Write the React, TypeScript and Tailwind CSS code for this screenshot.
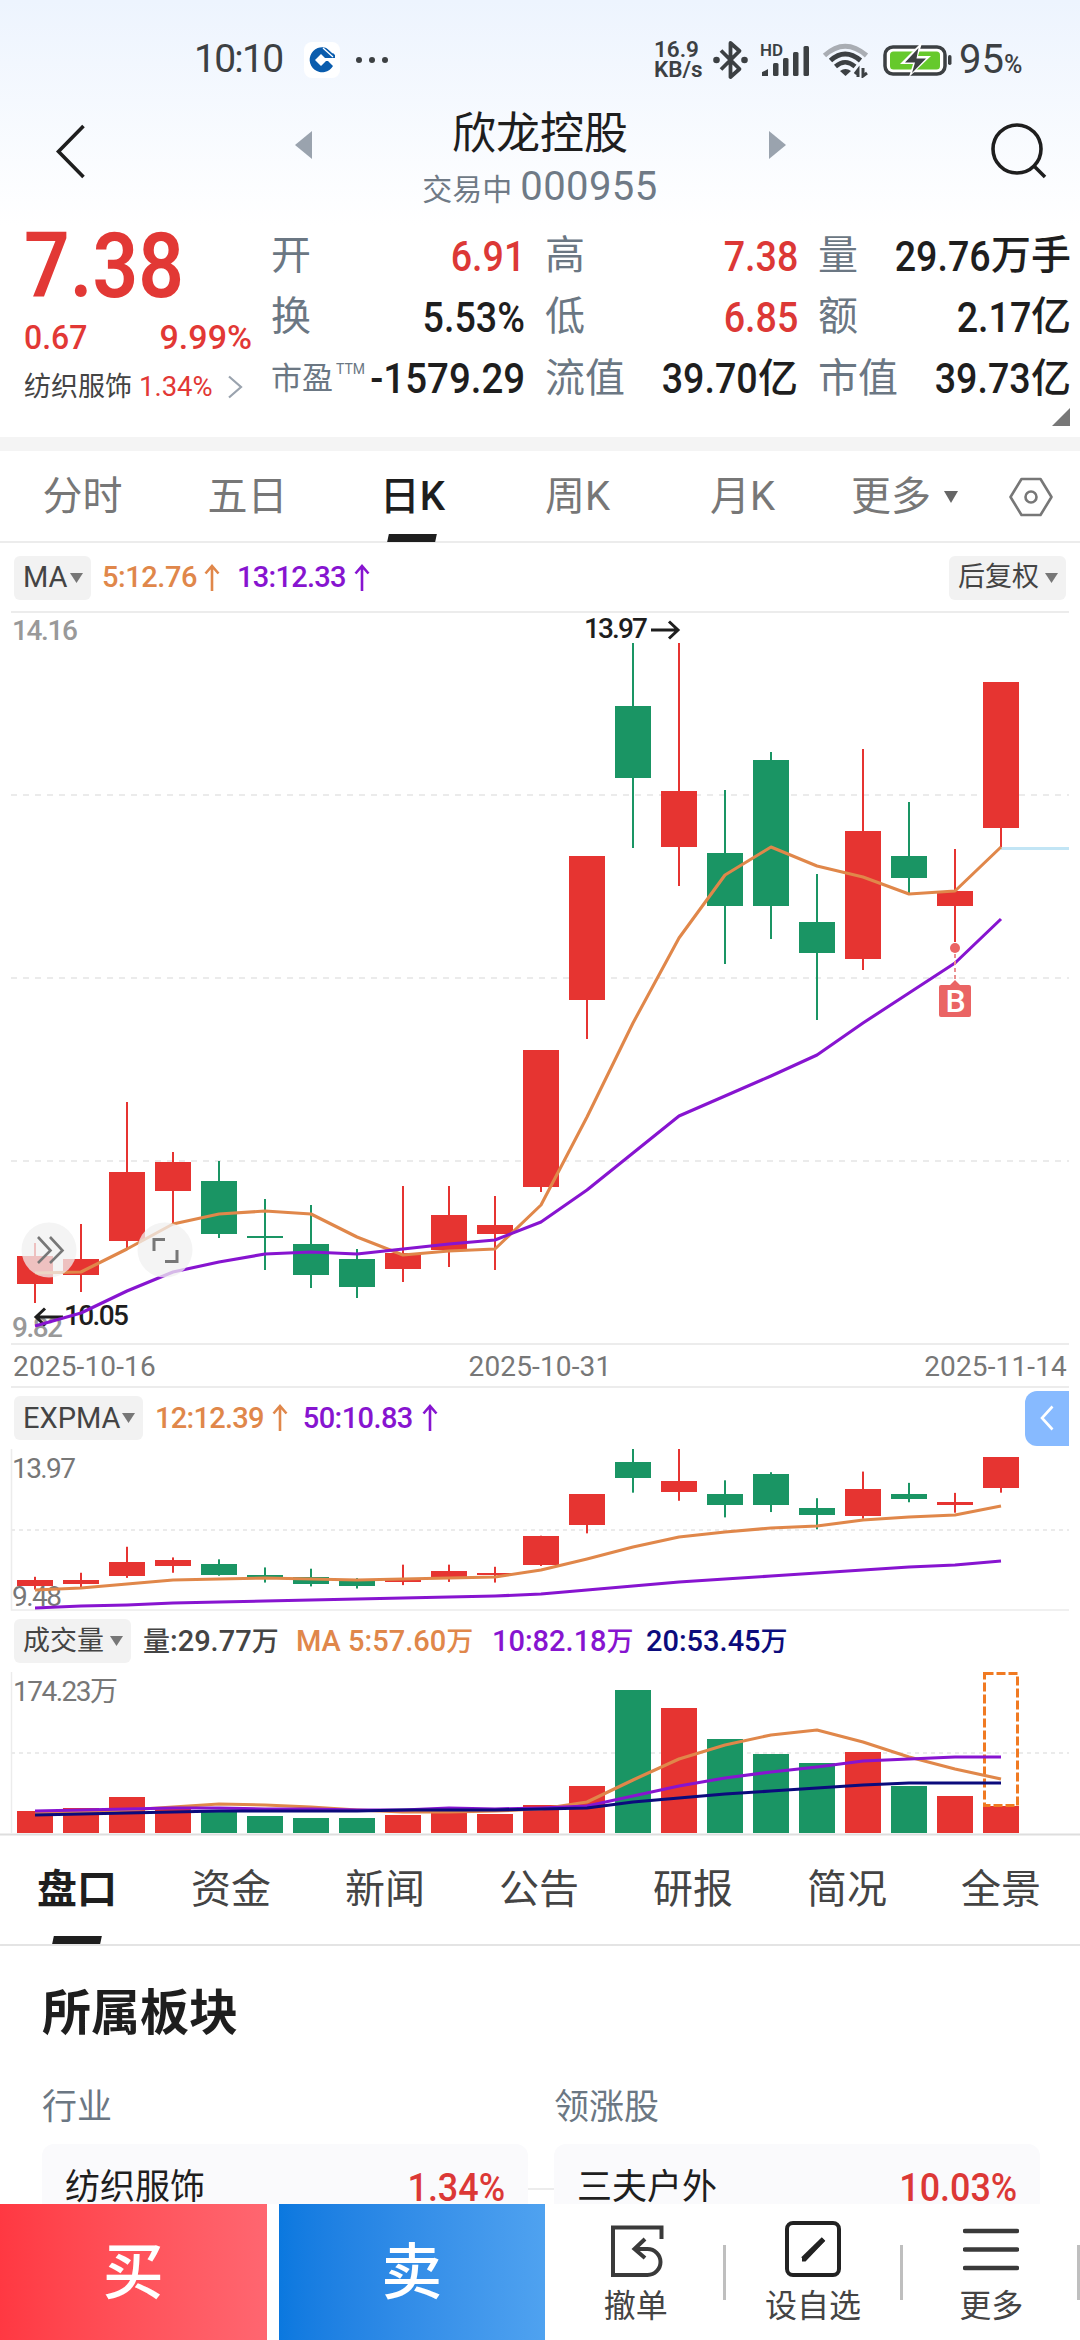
import type { ReactNode } from 'react'

const RED = '#e63431'
const GREEN = '#1a9564'
const ORANGE = '#e0874a'
const PURPLE = '#8714d0'
const NAVY = '#0b0b7c'

// top, bottom of the body, then high and low of the wick
type Candle = { up: boolean; body: [number, number]; wick: [number, number] }

const candles: Candle[] = [
  { up: true, body: [1256, 1284], wick: [1243, 1303] },
  { up: true, body: [1259, 1275], wick: [1224, 1292] },
  { up: true, body: [1172, 1241], wick: [1102, 1248] },
  { up: true, body: [1162, 1191], wick: [1152, 1224] },
  { up: false, body: [1181, 1234], wick: [1161, 1238] },
  { up: false, body: [1236, 1238], wick: [1199, 1270] },
  { up: false, body: [1244, 1275], wick: [1205, 1288] },
  { up: false, body: [1259, 1287], wick: [1249, 1298] },
  { up: true, body: [1253, 1269], wick: [1186, 1282] },
  { up: true, body: [1215, 1250], wick: [1186, 1267] },
  { up: true, body: [1225, 1234], wick: [1196, 1270] },
  { up: true, body: [1050, 1187], wick: [1050, 1192] },
  { up: true, body: [856, 1000], wick: [856, 1039] },
  { up: false, body: [706, 778], wick: [643, 848] },
  { up: true, body: [791, 847], wick: [643, 886] },
  { up: false, body: [853, 906], wick: [790, 964] },
  { up: false, body: [760, 906], wick: [752, 939] },
  { up: false, body: [922, 953], wick: [874, 1020] },
  { up: true, body: [831, 959], wick: [749, 970] },
  { up: false, body: [856, 878], wick: [802, 893] },
  { up: true, body: [891, 906], wick: [849, 942] },
  { up: true, body: [682, 828], wick: [682, 848] },
]

const ma5 = [1273, 1272, 1249, 1224, 1214, 1211, 1214, 1237, 1255, 1251, 1249, 1205, 1117, 1023, 938, 875, 847, 866, 877, 894, 891, 847]
const ma13 = [1326, 1313, 1291, 1272, 1262, 1254, 1252, 1254, 1249, 1244, 1240, 1222, 1190, 1153, 1116, 1096, 1076, 1055, 1023, 993, 963, 919]
const exp12 = [1590, 1588, 1584, 1580, 1579, 1578, 1579, 1580, 1579, 1578, 1577, 1570, 1559, 1547, 1537, 1532, 1528, 1526, 1520, 1517, 1515, 1506]
const exp50 = [1608, 1606, 1605, 1603, 1602, 1601, 1600, 1599, 1598, 1597, 1596, 1594, 1590, 1586, 1582, 1579, 1576, 1573, 1570, 1567, 1565, 1561]
const volume = [1811, 1808, 1797, 1807, 1810, 1816, 1818, 1818, 1815, 1813, 1814, 1805, 1786, 1690, 1708, 1739, 1754, 1763, 1752, 1786, 1796, 1806]
const vol5 = [1813, 1812, 1810, 1807, 1804, 1805, 1807, 1810, 1812, 1812, 1811, 1809, 1802, 1780, 1759, 1745, 1735, 1730, 1742, 1757, 1769, 1779]
const vol10 = [1811, 1810, 1809, 1808, 1808, 1809, 1809, 1810, 1810, 1808, 1809, 1808, 1806, 1796, 1786, 1778, 1772, 1767, 1761, 1759, 1757, 1757]
const vol20 = [1815, 1814, 1813, 1812, 1811, 1811, 1811, 1811, 1810, 1810, 1810, 1809, 1808, 1802, 1798, 1794, 1791, 1788, 1785, 1783, 1783, 1783]

const xAt = (i: number) => 35 + i * 46
const toMini = (y: number) => 1449 + (y - 643) * 0.213

function Line({ data, color, width = 3.1 }: { data: number[]; color: string; width?: number }) {
  const points = data.map((y, i) => `${xAt(i)},${y}`).join(' ')
  return <polyline points={points} fill="none" stroke={color} strokeWidth={width} strokeLinejoin="round" />
}

function Candles({ map = (y: number) => y }: { map?: (y: number) => number }) {
  return (
    <>
      {candles.map((c, i) => {
        const color = c.up ? RED : GREEN
        const top = Math.round(map(c.body[0]))
        const bottom = Math.round(map(c.body[1]))
        return (
          <g key={i} fill={color}>
            <rect x={xAt(i) - 1} y={map(c.wick[0])} width={2} height={map(c.wick[1]) - map(c.wick[0])} />
            <rect x={xAt(i) - 18} y={top} width={36} height={Math.max(bottom - top, 2)} />
          </g>
        )
      })}
    </>
  )
}

function Grid({ y, dash = '6 6' }: { y: number; dash?: string }) {
  return <line x1={11} x2={1069} y1={y} y2={y} stroke="#ebebeb" strokeWidth={2} strokeDasharray={dash} />
}

function Caret({ className = '' }: { className?: string }) {
  return (
    <svg viewBox="0 0 13 10" className={`h-2.5 w-[13px] shrink-0 ${className}`}>
      <path d="M0 0h13L6.500 10z" fill="currentColor" />
    </svg>
  )
}

function UpArrow() {
  return (
    <svg viewBox="0 0 16 28" className="h-7 w-4" fill="none" stroke="currentColor" strokeWidth={2.6}>
      <path d="M8 27V2M1.5 9.5L8 2l6.5 7.5" />
    </svg>
  )
}

function Chip({ children, className = '' }: { children: ReactNode; className?: string }) {
  return (
    <div className={`flex h-11 items-center justify-between rounded-md bg-[#f2f2f2] pl-[9px] pr-[8px] text-[#444] ${className}`}>
      {children}
      <Caret className="text-[#777]" />
    </div>
  )
}

function StatusBar() {
  return (
    <div className="flex h-[118px] items-center pl-[194px] pt-px text-[#3c4043]">
      <span className="w-[110px] text-[39px] leading-none tracking-[-0.045em]">10:10</span>
      <div className="flex size-[36px] items-center justify-center rounded-lg bg-white">
        <svg viewBox="0 0 28 28" className="size-7">
          <path d="M24 6A12.5 12.5 0 1 0 25 20L20 15h-2l-5 5-6-6 6-6 4 4h10V9z" fill="#0a5cad" />
          <path d="M15 2l10 9M19 1.500l6 5.500" stroke="#fff" strokeWidth={1.3} />
        </svg>
      </div>
      <div className="ml-[16px] flex gap-[7px]">
        <i className="size-[6px] rounded-full bg-[#3c4043]" />
        <i className="size-[6px] rounded-full bg-[#3c4043]" />
        <i className="size-[6px] rounded-full bg-[#3c4043]" />
      </div>
      <div className="ml-[266px] w-[58px] text-[22.5px] font-semibold leading-[19.5px]">
        <div>16.9</div>
        <div>KB/s</div>
      </div>
      <svg viewBox="0 0 36 40" className="h-10 w-9" fill="none" stroke="#3c4043" strokeWidth={3.800}>
        <path d="M9 10.500L27.500 29 18.500 37V3L27.500 11 9 29.500" strokeLinejoin="round" />
        <circle cx={4.500} cy={20} r={3.300} fill="#3c4043" stroke="none" />
        <circle cx={32.500} cy={20} r={3.300} fill="#3c4043" stroke="none" />
      </svg>
      <svg viewBox="0 0 52 36" className="ml-[12px] h-9 w-[52px] overflow-visible" fill="#3c4043">
        <text x={0} y={14} fontSize={17} fontWeight={600} textLength={23} lengthAdjust="spacingAndGlyphs">HD</text>
        <path d="M2 34v-4q3-1 6-3v7z" />
        <rect x={13} y={21} width={5.500} height={13} rx={1.500} />
        <rect x={23} y={16} width={5.500} height={18} rx={1.500} />
        <rect x={33} y={10} width={5.500} height={24} rx={1.500} />
        <rect x={43.500} y={4} width={5.500} height={30} rx={1.500} />
      </svg>
      <svg viewBox="0 0 50 36" className="ml-[10px] h-9 w-[50px]" fill="none" strokeWidth={5}>
        <path d="M2.500 13.500Q23 -5 44.500 13.500" stroke="#a9adb3" />
        <path d="M8.500 18.500Q23 5.500 38.500 18.500" stroke="#3c4043" />
        <path d="M13.500 24.500Q23 16 33 24.500" stroke="#3c4043" strokeWidth={4.500} />
        <path d="M18 29q5.500-4 11 0l-5.500 5z" fill="#3c4043" />
        <path d="M36 35v-7l-3 4M41 26v8l4-3" stroke="#3c4043" strokeWidth={3} />
      </svg>
      <svg viewBox="0 0 70 34" className="ml-[11px] h-[34px] w-[70px]">
        <rect x={2} y={4} width={60} height={27} rx={8} fill="#fff" stroke="#3c4043" strokeWidth={3.500} />
        <rect x={7} y={8.500} width={50} height={18} rx={3.500} fill="#66c92c" />
        <rect x={65} y={12} width={3.500} height={10} rx={1.700} fill="#3c4043" />
        <path d="M38 0L17 21h13l-4 13L48 13H35l4-13z" fill="#fff" />
        <path d="M35.500 5L22 19.500h10L29 30l14-14.500H33.500z" fill="#3c4043" />
      </svg>
      <div className="ml-[6px] flex items-baseline leading-none">
        <span className="text-[40px]">95</span>
        <span className="text-[25px] font-medium">%</span>
      </div>
    </div>
  )
}

function TitleBar() {
  return (
    <div className="flex h-[107px] items-start justify-between pl-[55px] pr-[32px]">
      <svg viewBox="0 0 32 56" className="mt-[6px] h-14 w-8" fill="none" stroke="#1e1e1e" strokeWidth={3.600}>
        <path d="M28.500 2L3.500 27.500 28.500 53" />
      </svg>
      <div className="ml-[3px] flex items-start">
        <svg viewBox="0 0 17 28" className="mt-[13px] h-7 w-[17px]">
          <path d="M17 0v28L0 14z" fill="#9aa3ae" />
        </svg>
        <div className="w-[457px] text-center">
          <div className="-mt-[7px] text-[44px] leading-[46px] text-[#1e1e1e]">欣龙控股</div>
          <div className="mt-[7px] flex h-[46px] items-baseline justify-center gap-[8px] text-[#6f7a86]">
            <span className="text-[30px]">交易中</span>
            <span className="text-[40px] font-normal leading-[46px] tracking-[0.01em]">000955</span>
          </div>
        </div>
        <svg viewBox="0 0 17 28" className="mt-[13px] h-7 w-[17px]">
          <path d="M0 0v28l17-14z" fill="#9aa3ae" />
        </svg>
      </div>
      <svg viewBox="0 0 58 58" className="mt-[4px] size-[58px]" fill="none" stroke="#1e1e1e" strokeWidth={3.600}>
        <circle cx={27} cy={27} r={24} />
        <path d="M44 44l11 11" />
      </svg>
    </div>
  )
}

type Cell = { label: string; value: string; unit?: string; red?: boolean; ttm?: boolean }

const quotes: Cell[] = [
  { label: '开', value: '6.91', red: true },
  { label: '高', value: '7.38', red: true },
  { label: '量', value: '29.76', unit: '万手' },
  { label: '换', value: '5.53%' },
  { label: '低', value: '6.85', red: true },
  { label: '额', value: '2.17', unit: '亿' },
  { label: '市盈', value: '-1579.29', ttm: true },
  { label: '流值', value: '39.70', unit: '亿' },
  { label: '市值', value: '39.73', unit: '亿' },
]

function Quote() {
  return (
    <div className="relative flex h-[212px] pl-[24px]">
      <div className="w-[247px] text-[#e23835]">
        <div className="mt-[-3px] h-[90px] origin-left scale-x-[.89] text-[90px] font-semibold leading-[90px]">7.38</div>
        <div className="mt-[7px] flex h-[36px] w-[228px] items-center justify-between text-[34px] font-medium leading-none">
          <span className="origin-left scale-x-[.94]">0.67</span>
          <span>9.99%</span>
        </div>
        <div className="mt-[16px] flex h-[32px] items-center text-[27px] leading-none">
          <span className="w-[115px] text-[#444]">纺织服饰</span>
          <span className="w-[88px] origin-left scale-x-[.98] text-[28px]">1.34%</span>
          <svg viewBox="0 0 16 24" className="h-6 w-4" fill="none" stroke="#9aa3ae" strokeWidth={2.200}>
            <path d="M2 1.500L14 12 2 22.500" />
          </svg>
        </div>
      </div>
      <div className="grid h-[184px] grid-cols-[254px_253px_253px] grid-rows-3 gap-x-[20px]">
        {quotes.map((q) => (
          <div key={q.label} className="flex items-center justify-between whitespace-nowrap pt-px leading-none">
            <span className={`flex items-start text-[#6b7783] ${q.ttm ? 'text-[31px]' : 'text-[40px]'}`}>
              {q.label}
              {q.ttm && <sup className="top-0 ml-[3px] mt-[-1px] w-0 text-[14px] leading-none">TTM</sup>}
            </span>
            <span className={`flex items-center ${q.red ? 'text-[#dc3836]' : 'text-[#1e1e1e]'}`}>
              <span className={`origin-right text-[43px] font-medium ${q.ttm ? 'scale-x-[.895]' : 'scale-x-[.875]'}`}>{q.value}</span>
              {q.unit && <span className="text-[40px] font-medium">{q.unit}</span>}
            </span>
          </div>
        ))}
      </div>
      <svg viewBox="0 0 18 18" className="absolute bottom-[11px] right-[10px] size-[18px]">
        <path d="M18 0v18H0z" fill="#777" />
      </svg>
    </div>
  )
}

function PeriodTabs() {
  const tabs = ['分时', '五日', '日K', '周K', '月K']
  return (
    <div className="flex h-[92px] items-center border-b-2 border-[#ececec] pt-[2px] text-[40px] leading-none text-[#777]">
      {tabs.map((t) =>
        t === '日K' ? (
          <div key={t} className="relative flex h-full w-[165px] items-center justify-center font-medium text-[#1e1e1e]">
            {t}
            <i className="absolute bottom-[-1px] left-[58px] h-2 w-[48px] -skew-x-12 bg-[#1e1e1e]" />
          </div>
        ) : (
          <div key={t} className="w-[165px] text-center">{t}</div>
        ),
      )}
      <div className="flex w-[184px] items-center pl-[26px]">
        更多
        <svg viewBox="0 0 14 12" className="ml-[13px] h-3 w-3.5">
          <path d="M0 0h14L7 12z" fill="#666" />
        </svg>
      </div>
      <svg viewBox="0 0 44 40" className="h-10 w-11" fill="none" stroke="#777" strokeWidth={2.600}>
        <path d="M12.500 2h19L42.500 20l-11 18h-19L1.500 20z" strokeLinejoin="round" />
        <circle cx={22} cy={20} r={5.500} />
      </svg>
    </div>
  )
}

function MainChart() {
  return (
    <svg viewBox="0 611 1080 734" className="block h-[734px] w-[1080px]" fontFamily="Roboto, 'Noto Sans CJK SC', sans-serif" fontSize={28}>
      <path d="M11 612H1069M11 1344H1069" stroke="#ececec" strokeWidth={2} />
      <Grid y={795} />
      <Grid y={978} />
      <Grid y={1161} />
      <text x={12} y={640} fill="#999" fontWeight={500} textLength={66}>14.16</text>
      <text x={12} y={1337} fill="#999" fontWeight={500} textLength={51}>9.82</text>
      <Candles />
      <text x={584} y={638} fill="#1e1e1e" fontWeight={500} textLength={64}>13.97</text>
      <path d="M651 630h26M669 621.500l9 8.500-9 8.500" fill="none" stroke="#1e1e1e" strokeWidth={3} />
      <text x={64} y={1325} fill="#1e1e1e" fontWeight={500} textLength={65}>10.05</text>
      <path d="M63 1317H37M45 1308.500l-9 8.500 9 8.500" fill="none" stroke="#1e1e1e" strokeWidth={3} />
      <path d="M1001 848.500H1069" stroke="#c2e5f5" strokeWidth={3} />
      <Line data={ma5} color={ORANGE} />
      <Line data={ma13} color={PURPLE} />

      {/* buy marker */}
      <circle cx={955} cy={948} r={5} fill="#ea6464" />
      <path d="M955 954v26" stroke="#ea9090" strokeWidth={2} strokeDasharray="4 3" />
      <path d="M941 985h9l5-5 5 5h9q2 0 2 2v28q0 2-2 2h-28q-2 0-2-2v-28q0-2 2-2z" fill="#ea6464" />
      <text x={955.5} y={1012} fill="#fff" fontSize={32} fontWeight={500} textAnchor="middle">B</text>

      {/* floating buttons */}
      <circle cx={49} cy={1250} r={27.500} fill="#f0f0f0" fillOpacity={0.75} />
      <path d="M38 1237l12.500 13.500L38 1263M50 1237l12.500 13.500L50 1263" fill="none" stroke="#777" strokeWidth={2.600} />
      <circle cx={165} cy={1250} r={27.500} fill="#f0f0f0" fillOpacity={0.75} />
      <path d="M154 1251v-11.500h11M177 1250v11.500h-12" fill="none" stroke="#777" strokeWidth={3} />
    </svg>
  )
}

function ExpmaChart() {
  return (
    <svg viewBox="0 1447 1080 165" className="block h-[165px] w-[1080px]" fontFamily="Roboto, sans-serif" fontSize={28}>
      <path d="M11.500 1449V1610H1069" fill="none" stroke="#ececec" strokeWidth={1.500} />
      <Grid y={1530} dash="4 4" />
      <Candles map={toMini} />
      <text x={12} y={1478} fill="#777" textLength={64}>13.97</text>
      <text x={12} y={1606} fill="#777" textLength={50}>9.48</text>
      <Line data={exp12} color={ORANGE} />
      <Line data={exp50} color={PURPLE} />
    </svg>
  )
}

function VolumeChart() {
  return (
    <svg viewBox="0 1670 1080 166" className="block h-[166px] w-[1080px]" fontFamily="Roboto, 'Noto Sans CJK SC', sans-serif" fontSize={28}>
      <path d="M11.500 1672V1833" stroke="#ececec" strokeWidth={1.500} />
      <Grid y={1753} dash="4 4" />
      {volume.map((y, i) => (
        <rect key={i} x={xAt(i) - 18} y={y} width={36} height={1833 - y} fill={candles[i].up ? RED : GREEN} />
      ))}
      <path d="M0 1834.500H1080" stroke="#dedede" strokeWidth={2} />
      <text x={13} y={1701} fill="#777" textLength={105}>174.23万</text>
      <rect x={984.5} y={1673.500} width={33} height={132} fill="none" stroke="#f07a22" strokeWidth={3} strokeDasharray="9 3" />
      <Line data={vol5} color={ORANGE} />
      <Line data={vol10} color={PURPLE} />
      <Line data={vol20} color={NAVY} />
    </svg>
  )
}

function InfoTabs() {
  return (
    <div className="flex h-[110px] gap-[74px] border-b-2 border-[#e4e4e4] pl-[37px] text-[40px] leading-[108px] text-[#444]">
      <div className="relative w-20 font-bold text-[#1e1e1e]">
        盘口
        <i className="absolute bottom-0 left-[16px] h-2 w-[48px] -skew-x-12 bg-[#1e1e1e]" />
      </div>
      {['资金', '新闻', '公告', '研报', '简况', '全景'].map((t) => (
        <div key={t} className="w-20">{t}</div>
      ))}
    </div>
  )
}

function Plate({ title, name, change }: { title: string; name: string; change: string }) {
  return (
    <div className="w-[486px]">
      <div className="h-[54px] text-[35px] leading-none text-[#6b7783]">{title}</div>
      <div className="flex h-[100px] items-start justify-between rounded-xl bg-[#fafafc] px-[23px] pt-[24px] text-[35px] leading-[40px] text-[#1e1e1e]">
        {name}
        <span className="origin-right scale-x-[.92] text-[39px] font-medium text-[#dc3836]">{change}</span>
      </div>
    </div>
  )
}

function BottomBar() {
  return (
    <div className="relative flex h-[136px] bg-white text-[32px] text-[#444]">
      <button className="w-[267px] bg-linear-to-r from-[#ff3842] to-[#ff6670] pt-[2px] text-[61px] font-medium leading-none text-white">买</button>
      <button className="ml-[12px] w-[267px] bg-linear-to-r from-[#0a78df] to-[#4fa2f0] pt-[2px] text-[61px] font-medium leading-none text-white">卖</button>
      <div className="flex w-[178px] flex-col items-center pl-[4px] pt-[17px]">
        <svg viewBox="0 0 56 60" className="ml-[3px] h-[60px] w-14" fill="none" stroke="#3a3a3a" strokeWidth={4}>
          <path d="M52.500 18V6.500H4V54H38.500A13 13 0 0 0 38.500 28H26M36 18L25.500 28 36 37" />
        </svg>
        <span className="mt-[9px] leading-none">撤单</span>
      </div>
      <i className="mt-[41px] h-[55px] w-[3px] shrink-0 bg-[#bfbfbf]" />
      <div className="flex w-[175px] flex-col items-center pt-[17px]">
        <svg viewBox="0 0 56 60" className="h-[60px] w-14" fill="none" stroke="#222" strokeWidth={4}>
          <rect x={2} y={2} width={52} height={52} rx={6} />
          <path d="M17 40.500V37L37 17l3 3-19.500 20.500z" fill="#222" stroke="none" />
          <path d="M18 38L38.500 18" strokeWidth={5} />
        </svg>
        <span className="mt-[9px] leading-none">设自选</span>
      </div>
      <i className="mt-[41px] h-[55px] w-[3px] shrink-0 bg-[#bfbfbf]" />
      <div className="flex w-[174px] flex-col items-center pl-[2px] pt-[17px]">
        <svg viewBox="0 0 56 60" className="h-[60px] w-14" fill="none" stroke="#3a3a3a" strokeWidth={4.500} strokeLinecap="round">
          <path d="M2 10h52M2 28.500h52M2 47h52" />
        </svg>
        <span className="mt-[9px] leading-none">更多</span>
      </div>
      <i className="mt-[41px] h-[55px] w-[3px] shrink-0 bg-[#bfbfbf]" />
    </div>
  )
}

export default function App() {
  return (
    <div className="flex h-[2340px] w-[1080px] flex-col overflow-hidden bg-white font-['Roboto','Noto_Sans_CJK_SC',sans-serif]">
      <header className="bg-linear-to-b from-[#edf4fe] to-white">
        <StatusBar />
        <TitleBar />
      </header>
      <Quote />
      <div className="h-[14px] bg-[#f4f4f4]" />
      <PeriodTabs />

      <div className="flex h-[68px] items-center justify-between pl-[14px] pr-[14px] pt-px text-[29px] leading-none">
        <div className="flex items-center font-medium">
          <Chip className="w-[77px] font-normal">MA</Chip>
          <div className="ml-[11px] flex items-center gap-[7px] tracking-[-0.015em] text-[#e0874a]">5:12.76<UpArrow /></div>
          <div className="ml-[17px] flex items-center gap-[8px] tracking-[-0.025em] text-[#8714d0]">13:12.33<UpArrow /></div>
        </div>
        <Chip className="w-[117px] text-[27px]">后复权</Chip>
      </div>
      <MainChart />
      <div className="mx-[11px] flex h-[43px] items-center justify-between border-b-2 border-[#ececec] px-[2px] pt-[2px] text-[28px] leading-none tracking-[0.005em] text-[#777]">
        <span>2025-10-16</span>
        <span>2025-10-31</span>
        <span>2025-11-14</span>
      </div>

      <div className="flex h-[59px] items-center justify-between pl-[14px] pr-[11px] pt-px text-[29px] leading-none">
        <div className="flex items-center font-medium">
          <Chip className="w-[129px] font-normal">EXPMA</Chip>
          <div className="ml-[12px] flex items-center gap-[8px] tracking-[-0.025em] text-[#e0874a]">12:12.39<UpArrow /></div>
          <div className="ml-[15px] flex items-center gap-[9px] tracking-[-0.02em] text-[#8714d0]">50:10.83<UpArrow /></div>
        </div>
        <div className="flex h-[55px] w-11 items-center justify-center rounded-l-xl bg-[#87baff]">
          <svg viewBox="0 0 14 26" className="h-[26px] w-3.5" fill="none" stroke="#fff" strokeWidth={2.600}>
            <path d="M12.500 1.500L2 13l10.500 11.500" />
          </svg>
        </div>
      </div>
      <ExpmaChart />

      <div className="flex h-[58px] items-center pl-[14px] text-[29px] font-medium leading-none">
        <Chip className="w-[117px] text-[27px] font-normal">成交量</Chip>
        <span className="ml-[12px] w-[153px] text-[#444]"><span className="text-[27px]">量</span>:29.77<span className="text-[27px]">万</span></span>
        <span className="w-[196px] text-[#e0874a]">MA 5:57.60<span className="text-[27px]">万</span></span>
        <span className="w-[154px] text-[#8714d0]">10:82.18<span className="text-[27px]">万</span></span>
        <span className="text-[#0b0b7c]">20:53.45<span className="text-[27px]">万</span></span>
      </div>
      <VolumeChart />
      <InfoTabs />

      <div className="relative flex h-[258px] flex-col overflow-hidden pl-[42px] pr-[40px]">
        <h2 className="mt-[42px] text-[49px] font-bold leading-[52px] text-[#1e1e1e]">所属板块</h2>
        <div className="mt-[50px] flex justify-between">
          <Plate title="行业" name="纺织服饰" change="1.34%" />
          <i className="mt-[98px] h-[2px] flex-1 bg-[#ececec]" />
          <Plate title="领涨股" name="三夫户外" change="10.03%" />
        </div>
      </div>
      <BottomBar />
    </div>
  )
}
